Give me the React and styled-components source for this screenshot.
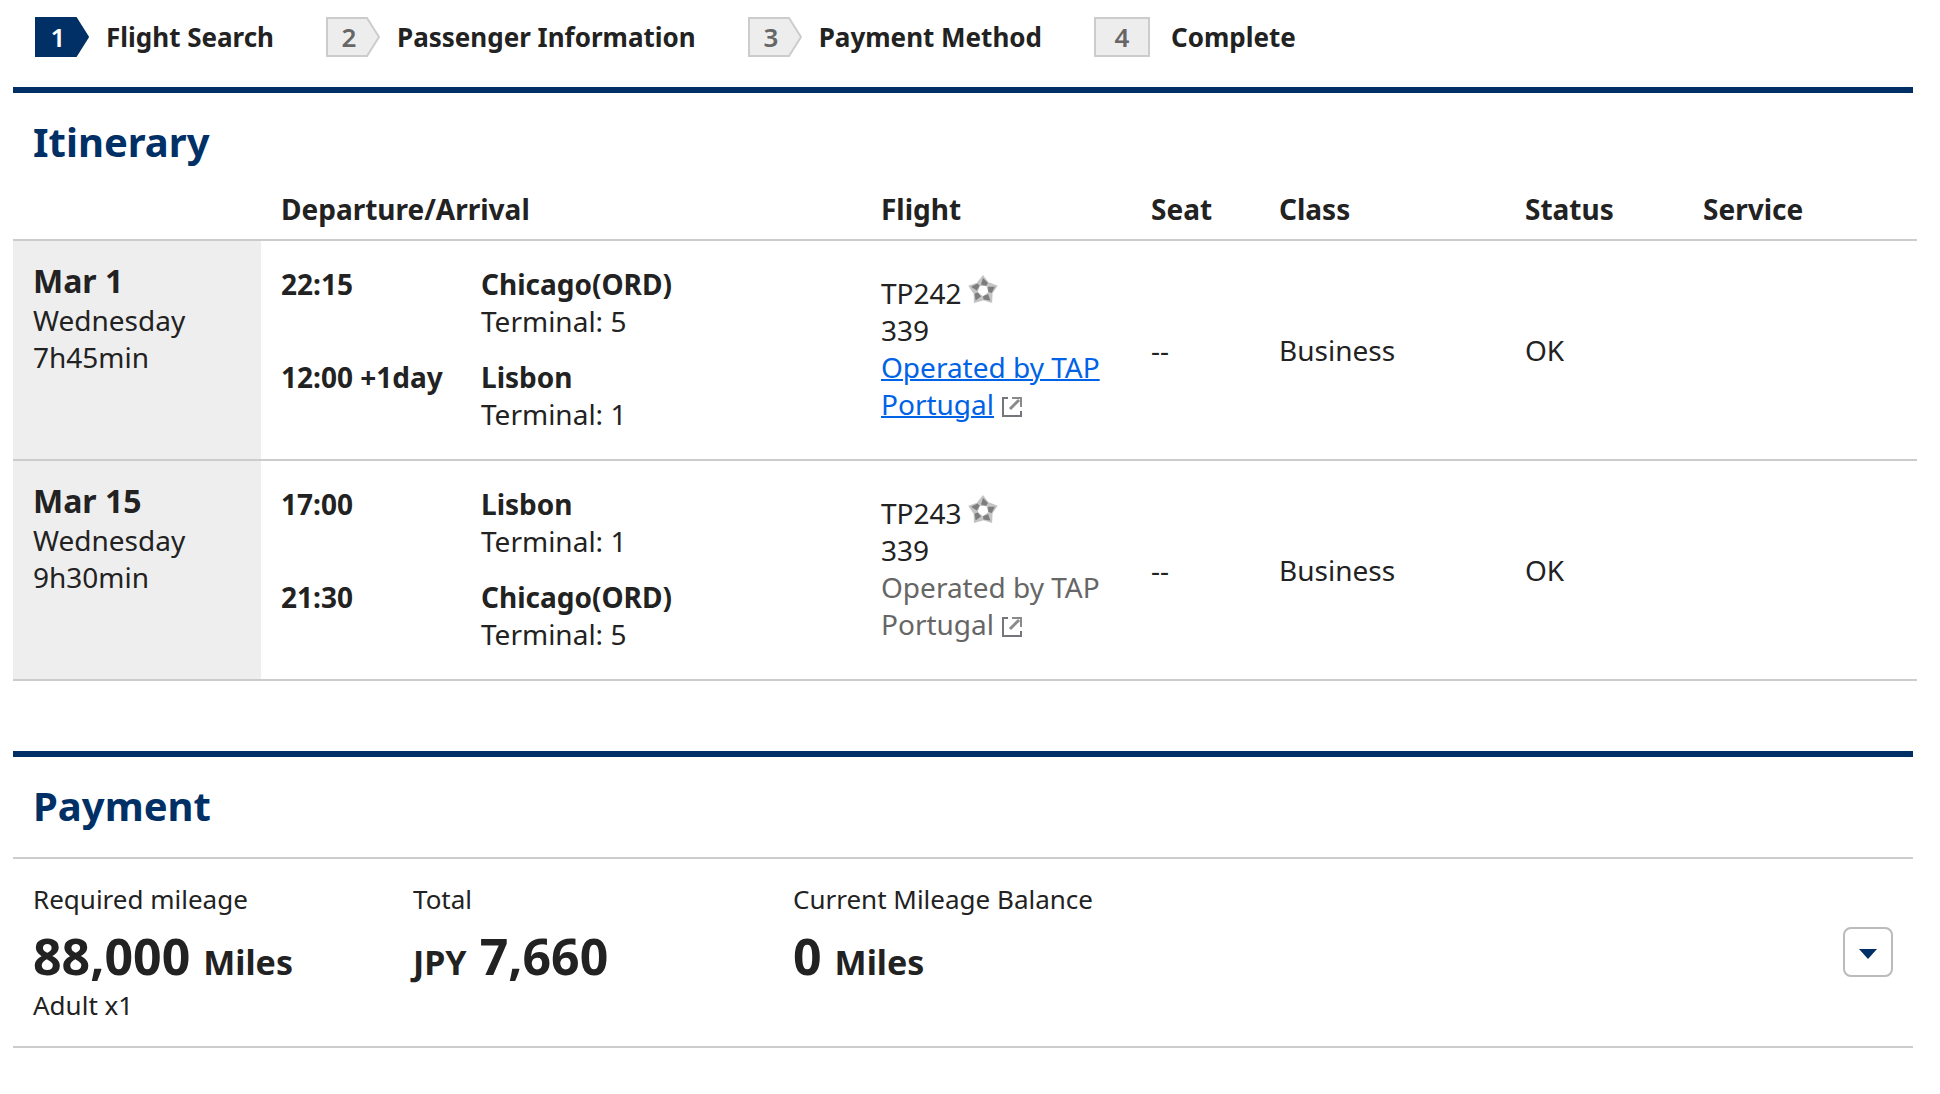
import React, { useState } from "react";
import styled, { createGlobalStyle } from "styled-components";

const steps = ["Flight Search", "Passenger Information", "Payment Method", "Complete"];

const flights = [
  {
    date: "Mar 1",
    day: "Wednesday",
    duration: "7h45min",
    number: "TP242",
    aircraft: "339",
    operator: "Operated by TAP Portugal",
    visited: false,
    seat: "--",
    cabin: "Business",
    status: "OK",
    stops: [
      { time: "22:15", city: "Chicago(ORD)", terminal: "Terminal: 5" },
      { time: "12:00 +1day", city: "Lisbon", terminal: "Terminal: 1" },
    ],
  },
  {
    date: "Mar 15",
    day: "Wednesday",
    duration: "9h30min",
    number: "TP243",
    aircraft: "339",
    operator: "Operated by TAP Portugal",
    visited: true,
    seat: "--",
    cabin: "Business",
    status: "OK",
    stops: [
      { time: "17:00", city: "Lisbon", terminal: "Terminal: 1" },
      { time: "21:30", city: "Chicago(ORD)", terminal: "Terminal: 5" },
    ],
  },
];

const StepBadge = ({ number, active, last }) => {
  const fill = active ? "#003066" : "#ededed";
  const stroke = active ? "#003066" : "#cccccc";
  const width = last ? 60 : 54;
  return (
    <Badge width={width} height="40" viewBox={`0 0 ${width} 40`} aria-hidden="true">
      <path
        d={last ? "M1 1H55V39H1Z" : "M1 1H41L53 20L41 39H1Z"}
        fill={fill}
        stroke={stroke}
        strokeWidth="2"
      />
      <BadgeNumber x={last ? 28 : 23} y="30" textAnchor="middle" fill={active ? "#fff" : "#666"}>
        {number}
      </BadgeNumber>
    </Badge>
  );
};

const StarAlliance = () => (
  <StarIcon width="30" height="28" viewBox="0 0 30 28" role="img" aria-label="Star Alliance">
    {[0, 72, 144, 216, 288].map((angle) => (
      <g key={angle} transform={`rotate(${angle} 15 15.5)`}>
        <path d="M15 0L21 8L18.5 11L11.5 11L9 7.5Z" fill="#c4c4c4" />
        <path d="M15 3L20 8L18.5 11L13 9.5Z" fill="#7d7d7d" />
      </g>
    ))}
  </StarIcon>
);

const NewWindow = () => (
  <WindowIcon width="20" height="20" viewBox="0 0 20 20" role="img" aria-label="Opens in a new window">
    <path d="M6 1H1V19H19V14" fill="none" stroke="#75757c" strokeWidth="2" />
    <path d="M8 12L17 3" fill="none" stroke="#8a8a8a" strokeWidth="3" />
    <path d="M10 1H19V10" fill="none" stroke="#8a8a8a" strokeWidth="2" />
  </WindowIcon>
);

const App = () => {
  const [open, setOpen] = useState(false);

  return (
    <Page>
      <GlobalStyle />
      <Steps>
        {steps.map((label, index) => (
          <Step key={label}>
            <StepBadge number={index + 1} active={index === 0} last={index === steps.length - 1} />
            {label}
          </Step>
        ))}
      </Steps>

      <Section>
        <Title>Itinerary</Title>
        <Table>
          <colgroup>
            <Col $width={248} />
            <Col $width={600} />
            <Col $width={270} />
            <Col $width={128} />
            <Col $width={246} />
            <Col $width={178} />
            <col />
          </colgroup>
          <thead>
            <tr>
              <HeadCell />
              <HeadCell scope="col">Departure/Arrival</HeadCell>
              <HeadCell scope="col">Flight</HeadCell>
              <HeadCell scope="col">Seat</HeadCell>
              <HeadCell scope="col">Class</HeadCell>
              <HeadCell scope="col">Status</HeadCell>
              <HeadCell scope="col">Service</HeadCell>
            </tr>
          </thead>
          <tbody>
            {flights.map((flight) => (
              <tr key={flight.number}>
                <DateCell scope="row">
                  <DateText>{flight.date}</DateText>
                  <div>{flight.day}</div>
                  <div>{flight.duration}</div>
                </DateCell>
                <RouteCell>
                  {flight.stops.map((stop) => (
                    <Stop key={stop.time}>
                      <strong>{stop.time}</strong>
                      <div>
                        <strong>{stop.city}</strong>
                        <div>{stop.terminal}</div>
                      </div>
                    </Stop>
                  ))}
                </RouteCell>
                <FlightCell>
                  <FlightNumber>
                    {flight.number}
                    <StarAlliance />
                  </FlightNumber>
                  <div>{flight.aircraft}</div>
                  <Operator href="#operator" $visited={flight.visited}>
                    {flight.operator}
                  </Operator>
                  <NewWindow />
                </FlightCell>
                <Cell>{flight.seat}</Cell>
                <Cell>{flight.cabin}</Cell>
                <Cell>{flight.status}</Cell>
                <Cell />
              </tr>
            ))}
          </tbody>
        </Table>
      </Section>

      <Section>
        <Title>Payment</Title>
        <Summary>
          <Amount>
            <Label>Required mileage</Label>
            <Value>
              88,000 <Unit>Miles</Unit>
            </Value>
            <Label>Adult x1</Label>
          </Amount>
          <Amount>
            <Label>Total</Label>
            <Value>
              <Unit>JPY</Unit> 7,660
            </Value>
          </Amount>
          <Amount>
            <Label>Current Mileage Balance</Label>
            <Value>
              0 <Unit>Miles</Unit>
            </Value>
          </Amount>
          <Toggle
            type="button"
            aria-label="Show payment details"
            aria-expanded={open}
            onClick={() => setOpen(!open)}
          >
            <svg width="18" height="10" viewBox="0 0 18 10" aria-hidden="true">
              <path d="M0 0H18L9 10Z" fill="#003066" />
            </svg>
          </Toggle>
        </Summary>
      </Section>
    </Page>
  );
};

export default App;

const GlobalStyle = createGlobalStyle`
  * {
    box-sizing: border-box;
  }

  body {
    margin: 0;
    background: #fff;
    color: #222;
    font-family: "Noto Sans", "Open Sans", sans-serif;
    font-size: 28px;
    line-height: 37px;
  }
`;

const Page = styled.main`
  padding: 17px 27px 20px 13px;
`;

const Steps = styled.ol`
  display: flex;
  gap: 52px;
  margin: 0 0 30px;
  padding: 0 22px;
  list-style: none;
`;

const Step = styled.li`
  display: flex;
  align-items: center;
  gap: 17px;
  height: 40px;
  font-size: 26px;
  font-weight: 700;
  white-space: nowrap;
`;

const Badge = styled.svg`
  flex: none;
`;

const BadgeNumber = styled.text`
  font-size: 26px;
  font-weight: 600;
`;

const Section = styled.section`
  border-top: 6px solid #003066;

  & + & {
    margin-top: 70px;
  }
`;

const Title = styled.h2`
  margin: 0;
  padding: 23px 20px 25px;
  color: #003066;
  font-size: 40px;
  line-height: 52px;
`;

const Table = styled.table`
  /* runs a little past the section rule on the right */
  width: calc(100% + 4px);
  table-layout: fixed;
  border-collapse: separate;
  border-spacing: 0;
`;

const Col = styled.col`
  width: ${({ $width }) => $width}px;
`;

const HeadCell = styled.th`
  padding: 0 20px 14px;
  border-bottom: 2px solid #ccc;
  line-height: 32px;
  text-align: left;
`;

const Cell = styled.td`
  height: 220px;
  padding: 0 20px;
  border-bottom: 2px solid #ccc;
`;

const DateCell = styled.th`
  padding: 19px 20px;
  border-bottom: 2px solid #ccc;
  background: #eee;
  font-weight: 400;
  text-align: left;
  vertical-align: top;
`;

const DateText = styled.div`
  font-size: 32px;
  font-weight: 700;
  line-height: 42px;
`;

const RouteCell = styled(Cell)`
  padding: 25px 20px 0;
  vertical-align: top;
`;

const Stop = styled.div`
  display: grid;
  grid-template-columns: 200px 1fr;
  margin-bottom: 19px;

  &:last-child {
    margin-bottom: 0;
  }
`;

const FlightCell = styled(Cell)`
  padding: 34px 0 0 20px;
  vertical-align: top;
`;

const FlightNumber = styled.div`
  display: flex;
`;

const StarIcon = styled.svg`
  margin-left: 6px;
`;

const Operator = styled.a`
  color: ${({ $visited }) => ($visited ? "#666" : "#0062e6")};
  text-decoration: ${({ $visited }) => ($visited ? "none" : "underline")};
  text-decoration-thickness: 2px;
`;

const WindowIcon = styled.svg`
  margin-left: 8px;
  vertical-align: -2px;
`;

const Summary = styled.div`
  display: flex;
  height: 191px;
  padding: 22px 20px 0;
  border-top: 2px solid #ccc;
  border-bottom: 2px solid #ccc;
`;

const Amount = styled.div`
  width: 380px;
`;

const Label = styled.div`
  font-size: 26px;
`;

const Value = styled.div`
  margin-top: 13px;
  font-size: 50px;
  font-weight: 700;
  line-height: 50px;
`;

const Unit = styled.span`
  font-size: 34px;
`;

const Toggle = styled.button`
  display: flex;
  align-items: center;
  justify-content: center;
  width: 50px;
  height: 50px;
  margin: 46px 0 0 auto;
  padding: 4px 0 0;
  border: 2px solid #bbb;
  border-radius: 8px;
  background: #fff;
  cursor: pointer;
`;
